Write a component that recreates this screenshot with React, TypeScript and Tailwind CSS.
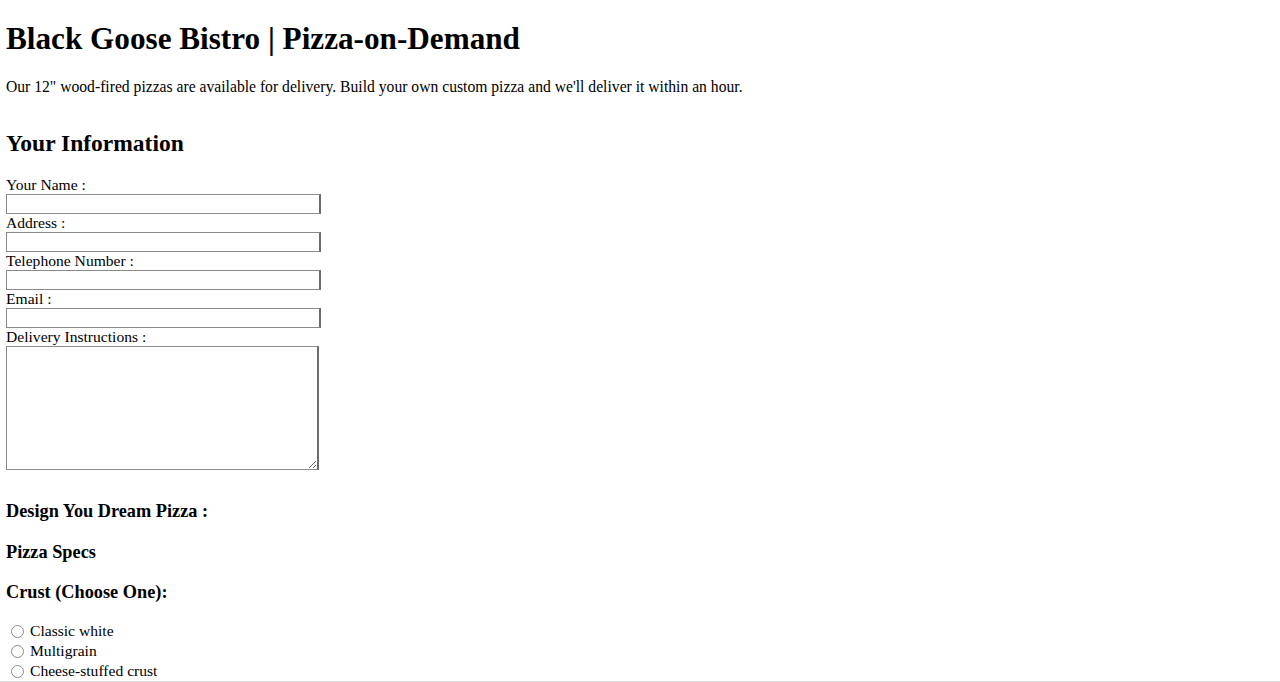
export default function App() {
  const fields = ["Your Name :", "Address :", "Telephone Number :", "Email :"];
  const crusts = ["Classic white", "Multigrain", "Cheese-stuffed crust"];

  return (
    <div className="min-h-[682px] bg-white px-[6px] text-black font-['Liberation_Serif','Times_New_Roman',serif]">
      {/* Header */}
      <h1 className="pt-[20px] text-[31.2px] font-bold leading-[37px]">
        Black Goose Bistro | Pizza-on-Demand
      </h1>
      <p className="mt-[21px] text-[15.65px] leading-[17px]">
        Our 12" wood-fired pizzas are available for delivery. Build your own
        custom pizza and we'll deliver it within an hour.
      </p>

      {/* Your Information */}
      <h2 className="mt-[34px] text-[23.5px] font-bold leading-[28px]">
        Your Information
      </h2>
      <form className="mt-[19px] flex flex-col">
        {fields.map((f) => (
          <div key={f} className="flex flex-col">
            <label className="text-[15.6px] leading-[18px]">{f}</label>
            <input
              type="text"
              className="h-[20px] w-[315px] border border-[#8a8a8a] border-r-2 border-r-[#6b6b6b] bg-white"
            />
          </div>
        ))}
        <label className="text-[15.6px] leading-[18px]">Delivery Instructions :</label>
        <textarea className="h-[124px] w-[313px] resize border border-[#8a8a8a] border-r-2 border-r-[#6b6b6b] bg-white" />

        {/* Pizza */}
        <h3 className="mt-[31px] text-[18.3px] font-bold leading-[21px]">
          Design You Dream Pizza :
        </h3>
        <h3 className="mt-[20px] text-[18.3px] font-bold leading-[21px]">Pizza Specs</h3>
        <h3 className="mt-[19px] text-[18.3px] font-bold leading-[21px]">
          Crust (Choose One):
        </h3>
        <div className="mt-[18px] flex flex-col">
          {crusts.map((c) => (
            <label key={c} className="flex h-[20px] items-center text-[15.6px]">
              <span className="ml-[5px] mr-[6px] inline-block h-[13px] w-[13px] rounded-full border border-[#8a8a8a] bg-white" />
              {c}
            </label>
          ))}
        </div>
      </form>
      <div className="-mx-[6px] h-[2px] bg-[#dcdcdc]" />
    </div>
  );
}
